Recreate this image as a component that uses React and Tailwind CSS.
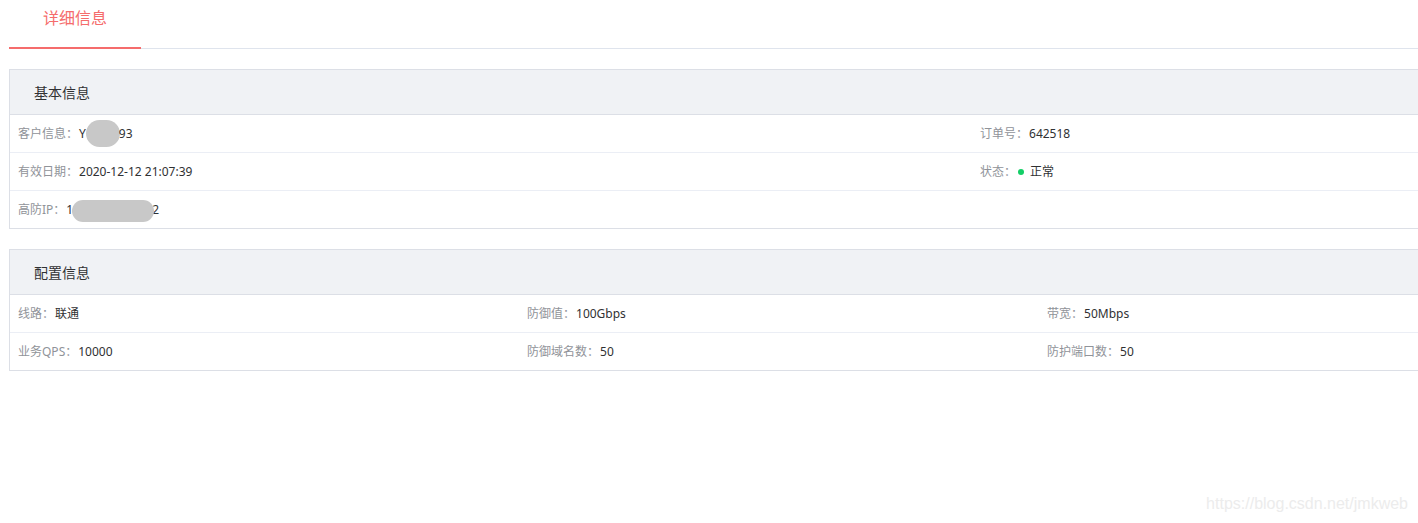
import React from 'react';

const Label = ({ children }) => <span className="text-[#909399] mr-px">{children}</span>;

const Blob = ({ className }) => (
  <span className={`inline-block bg-[#c8c8c8] rounded-full align-middle ${className}`} />
);

const Cell = ({ label, children, className = '' }) => (
  <div className={`flex items-center pl-[8px] text-[12px] text-[#303133] whitespace-nowrap ${className}`}>
    <Label>{label}</Label>
    {children}
  </div>
);

const Panel = ({ title, children }) => (
  <div className="ml-[9px] w-[1440px] border border-[#dcdfe6]">
    <div className="h-[45px] bg-[#f0f2f5] border-b border-[#dcdfe6] flex items-center pl-[24px] text-[14px] text-[#303133]">
      {title}
    </div>
    {children}
  </div>
);

const row = 'h-[38px] border-b border-[#ebeef5]';
const last = 'h-[37px]';

export default function App() {
  return (
    <div
      className="relative w-[1418px] h-[523px] overflow-hidden bg-white"
      style={{ fontFamily: '"Noto Sans", "Noto Sans CJK SC", "Microsoft YaHei", sans-serif' }}
    >
      {/* Tabs */}
      <div className="ml-[9px] h-[49px] border-b border-[#dfe4ed] flex">
        <div
          className="w-[132px] h-[49px] -mb-px border-b-2 border-[#f56c6c] text-[#f56c6c] text-[16px] leading-[24px] pt-[5px] text-center"
          style={{ fontFamily: '"Noto Sans CJK SC", sans-serif' }}
        >
          详细信息
        </div>
      </div>

      <div className="mt-[20px]">
        <Panel title="基本信息">
          <div className="grid grid-cols-[962px_1fr]">
            <Cell label="客户信息：" className={row}>
              <span>Y</span>
              <Blob className="w-[34px] h-[27px] ml-0 -mr-[1px]" />
              <span>93</span>
            </Cell>
            <Cell label="订单号：" className={row}>642518</Cell>
            <Cell label="有效日期：" className={row}>2020-12-12 21:07:39</Cell>
            <Cell label="状态：" className={row}>
              <span className="inline-block w-[6px] h-[6px] rounded-full bg-[#13ce66] ml-[1px] mr-[6px]" />
              <span>正常</span>
            </Cell>
            <Cell label="高防IP：" className={last}>
              <span>1</span>
              <Blob className="w-[82px] h-[22px] -ml-[1px] -mr-[2px] translate-y-[1px]" />
              <span>2</span>
            </Cell>
            <div className={last} />
          </div>
        </Panel>
      </div>

      <div className="mt-[20px]">
        <Panel title="配置信息">
          <div className="grid grid-cols-[509px_520px_1fr]">
            <Cell label="线路：" className={row}>联通</Cell>
            <Cell label="防御值：" className={row}>100Gbps</Cell>
            <Cell label="带宽：" className={row}>50Mbps</Cell>
            <Cell label="业务QPS：" className={last}>10000</Cell>
            <Cell label="防御域名数：" className={last}>50</Cell>
            <Cell label="防护端口数：" className={last}>50</Cell>
          </div>
        </Panel>
      </div>

      <div
        className="absolute right-[10px] bottom-[7px] text-[16px] text-[#ececec]"
        style={{ fontFamily: '"Liberation Sans", Arial, sans-serif' }}
      >
        https://blog.csdn.net/jmkweb
      </div>
    </div>
  );
}
